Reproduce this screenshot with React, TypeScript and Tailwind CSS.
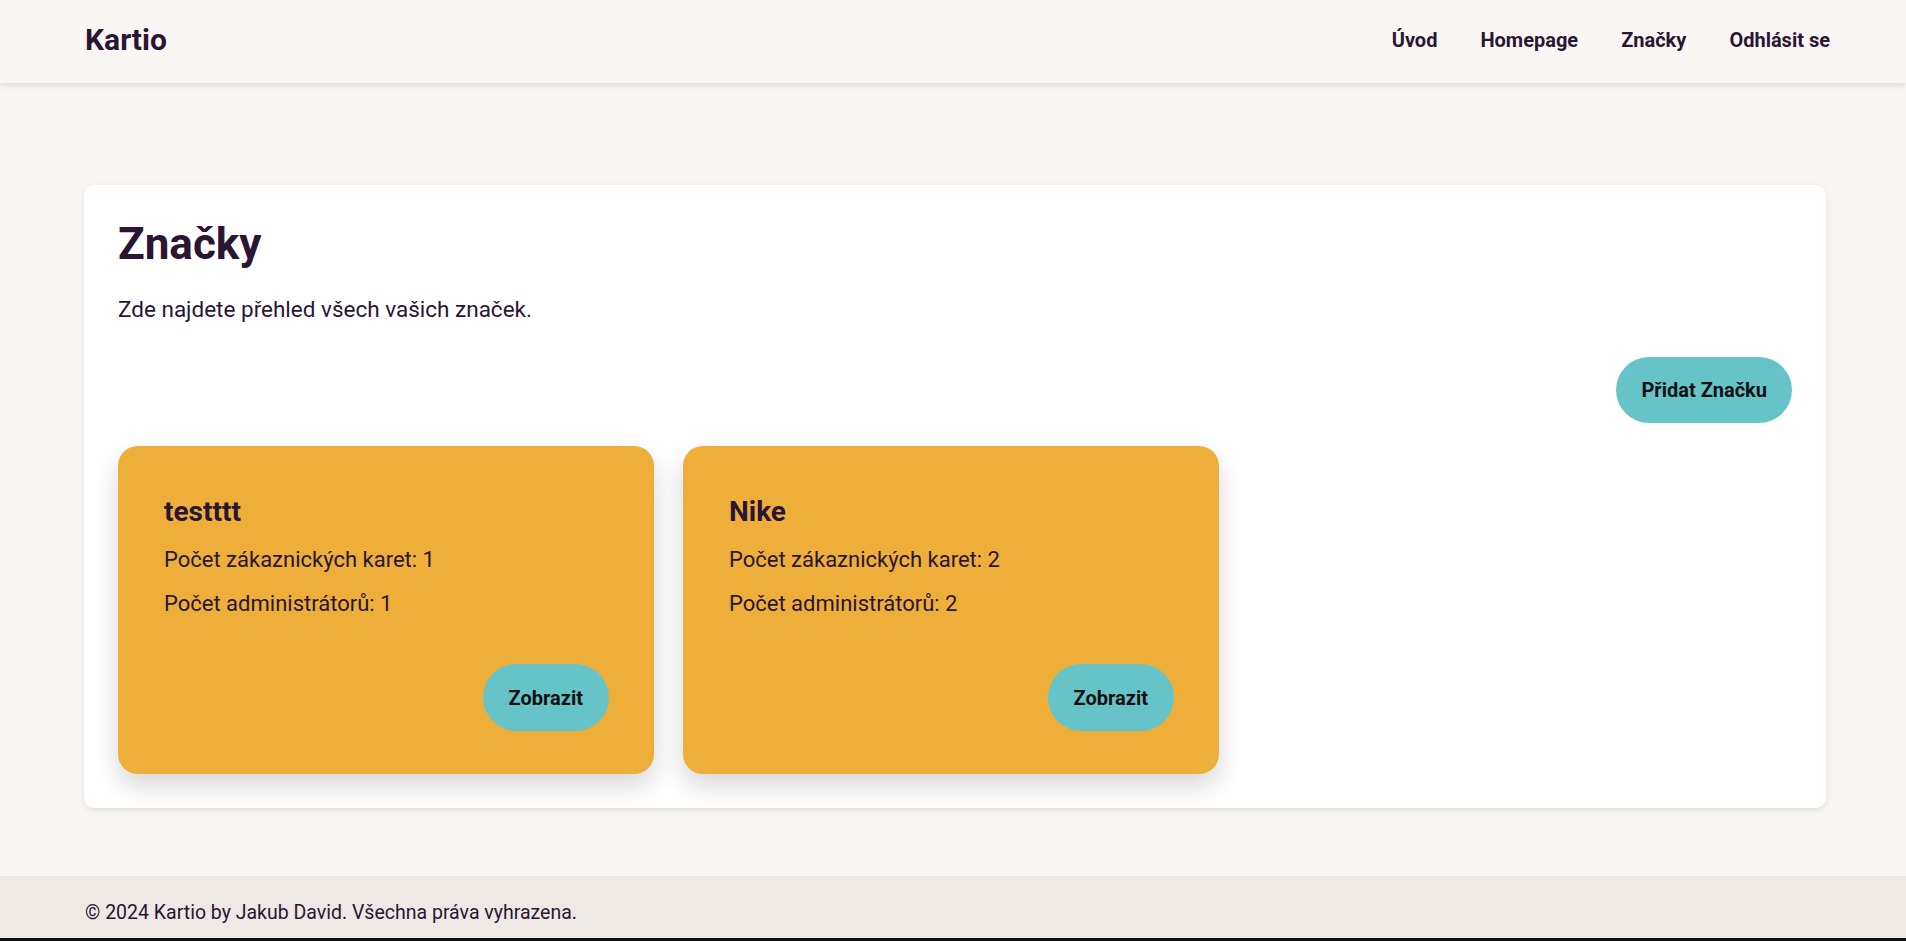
import React from 'react';

type Brand = {
  id: number;
  name: string;
  cardCount: number;
  adminCount: number;
};

const brands: Brand[] = [
  { id: 1, name: 'testttt', cardCount: 1, adminCount: 1 },
  { id: 2, name: 'Nike', cardCount: 2, adminCount: 2 },
];

const navLinks = ['Úvod', 'Homepage', 'Značky', 'Odhlásit se'];

const BrandCard: React.FC<{ brand: Brand }> = ({ brand }) => (
  <div className="w-[536px] h-[328px] flex flex-col rounded-[20px] bg-[#edae3a] pl-[46px] pr-[45px] shadow-[0_12px_26px_rgba(0,0,0,0.16)]">
    <div className="pt-[52px]">
      <h2 className="text-[28px] leading-none font-bold">{brand.name}</h2>
      <p className="mt-[19px] text-[22px] leading-[30px]">Počet zákaznických karet: {brand.cardCount}</p>
      <p className="mt-[14px] text-[22px] leading-[30px]">Počet administrátorů: {brand.adminCount}</p>
    </div>
    <div className="mt-auto pb-[43px] flex justify-end">
      <button className="h-[67px] px-[26px] rounded-full bg-[#66c3c7] text-[20px] font-bold text-[#111111]">
        Zobrazit
      </button>
    </div>
  </div>
);

export default function App() {
  return (
    <div className="min-h-screen flex flex-col bg-[#faf6f3] text-[#2a1634] font-['Roboto',sans-serif]">
      <header className="relative z-10 h-[83px] bg-[#faf6f3] shadow-[0_2px_6px_rgba(0,0,0,0.12)]">
        <div className="h-full pl-[85px] pr-[76px] pb-[4px] flex items-center justify-between">
          <a className="text-[30px] font-bold">Kartio</a>
          <nav className="flex items-center gap-[43px]">
            {navLinks.map(link => (
              <a key={link} className="text-[20px] font-bold">{link}</a>
            ))}
          </nav>
        </div>
      </header>

      <main className="flex-1 pl-[84px] pr-[80px] pt-[102px] pb-[68px]">
        <section className="bg-white rounded-[10px] shadow-[0_2px_6px_rgba(0,0,0,0.1)] px-[34px] pt-[37px] pb-[34px]">
          <h1 className="text-[44px] leading-none font-bold">Značky</h1>
          <p className="mt-[28px] text-[22.5px] leading-[30px]">Zde najdete přehled všech vašich značek.</p>
          <div className="mt-[33px] flex justify-end">
            <button className="h-[66px] px-[25px] rounded-full bg-[#66c3c7] text-[20px] font-bold text-[#111111]">
              Přidat Značku
            </button>
          </div>
          <div className="mt-[23px] flex gap-[29px]">
            {brands.map(b => (
              <BrandCard key={b.id} brand={b} />
            ))}
          </div>
        </section>
      </main>

      <footer className="h-[62px] bg-[#efe9e5] px-[85px] pt-[23px]">
        <p className="text-[19.5px] leading-7">© 2024 Kartio by Jakub David. Všechna práva vyhrazena.</p>
      </footer>
      <div className="h-[3px] bg-[#111111]" />
    </div>
  );
}
